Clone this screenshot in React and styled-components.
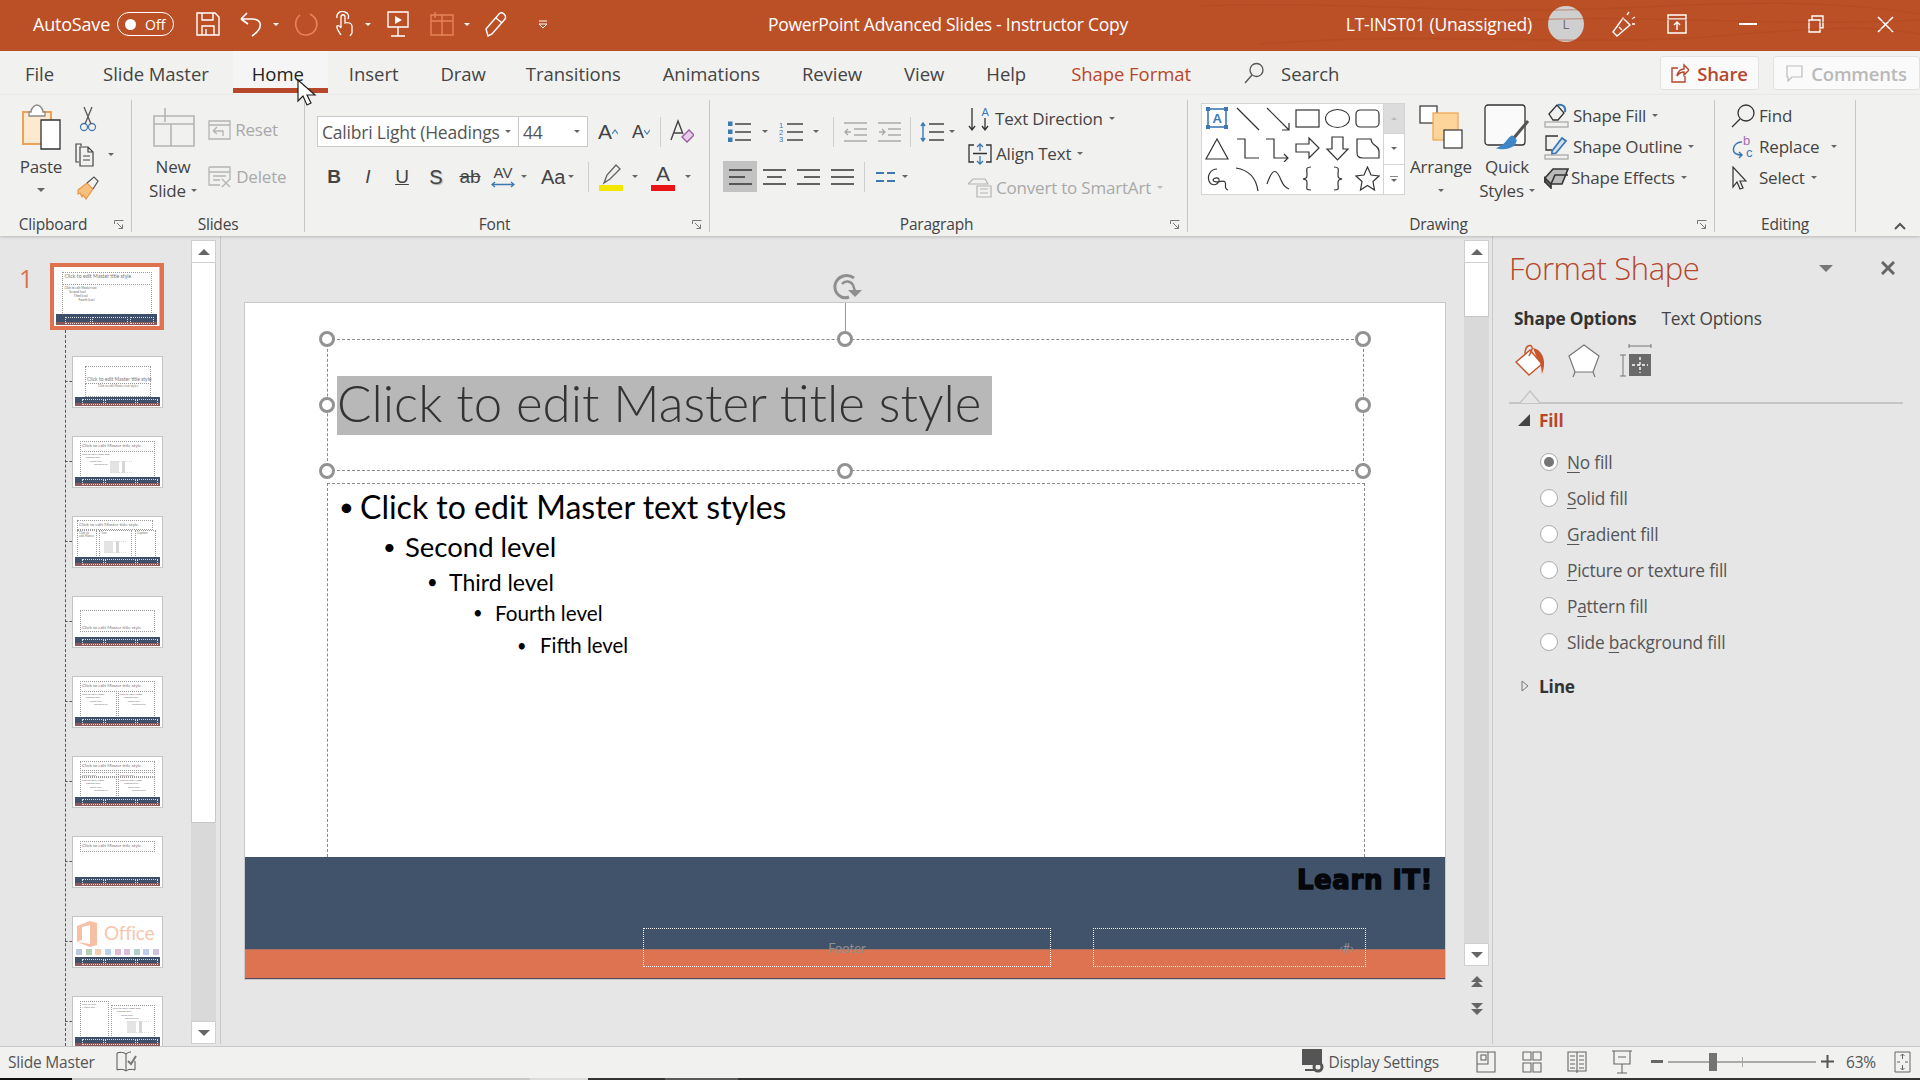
import React from "react";
import styled, { createGlobalStyle } from "styled-components";

const RUST = "#b7472a";
const INK = "#444";
const DIM = "#a9a9a9";
const BLUE = "#3e78b3";
const UI = '"Open Sans", "Noto Sans", sans-serif';
const DOC = 'Lato, "Open Sans", sans-serif';

const Global = createGlobalStyle`
  html, body { margin: 0; padding: 0; width: 1920px; height: 1080px; overflow: hidden; background: #e6e6e6; }
  body { font-family: ${UI}; color: ${INK}; }
  * { box-sizing: border-box; }
`;

const Window = styled.div`
  position: relative;
  width: 1920px;
  height: 1080px;
  display: flex;
  flex-direction: column;
  overflow: hidden;
`;

const Svg = styled.svg`
  display: block;
  flex: none;
  margin-left: ${(p) => p.$ml || 0}px;
`;

const Icon = ({ w, h, ml, children, stroke = INK, sw = 1.4, fill = "none" }) => (
  <Svg width={w} height={h} viewBox={`0 0 ${w} ${h}`} $ml={ml} fill={fill} stroke={stroke} strokeWidth={sw}>
    {children}
  </Svg>
);

const Caret = styled.span`
  display: block;
  flex: none;
  width: 0;
  height: 0;
  margin-left: ${(p) => p.$ml || 0}px;
  border-left: ${(p) => p.$s || 4}px solid transparent;
  border-right: ${(p) => p.$s || 4}px solid transparent;
  border-top: ${(p) => p.$s || 4}px solid ${(p) => p.$c || "#666"};
`;

/* title bar */
const TitleBar = styled.header`
  position: relative;
  height: 51px;
  flex: none;
  display: flex;
  align-items: center;
  padding-bottom: 3px;
  background: #bb5027;
  color: #fff;
  font-size: 17px;
  overflow: hidden;
`;

const Wood = styled.svg`
  position: absolute;
  top: 0;
  right: 0;
`;

const Quick = styled.div`
  flex: 0 0 768px;
  display: flex;
  align-items: center;
  padding-left: 33px;
`;

const AutoSave = styled.span`
  font-size: 18px;
  letter-spacing: -0.2px;
`;

const Toggle = styled.span`
  margin-left: 7px;
  width: 57px;
  height: 24px;
  border: 1px solid #fff;
  border-radius: 12px;
  display: flex;
  align-items: center;
  padding-left: 7px;
  font-size: 14px;
  gap: 9px;
  &::before {
    content: "";
    width: 11px;
    height: 11px;
    border-radius: 50%;
    background: #fff;
  }
`;

const DocTitle = styled.span`
  font-size: 17.5px;
  letter-spacing: -0.25px;
  white-space: nowrap;
`;

const TitleRight = styled.div`
  margin-left: auto;
  display: flex;
  align-items: center;
  padding-right: 26px;
`;

const Avatar = styled.span`
  margin-left: 16px;
  width: 36px;
  height: 36px;
  border-radius: 50%;
  background: #d0cfcf;
  color: #6b6b6b;
  font-size: 13px;
  display: flex;
  align-items: center;
  justify-content: center;
`;

/* tabs */
const TabRow = styled.nav`
  height: 44px;
  flex: none;
  display: flex;
  align-items: center;
  background: #f1f1f0;
  padding-left: 4px;
  font-size: 18.5px;
  letter-spacing: -0.05px;
`;

const Tab = styled.span`
  position: relative;
  height: 44px;
  display: flex;
  align-items: center;
  white-space: nowrap;
  padding: 0 ${(p) => p.$pr ?? 21}px 0 ${(p) => p.$pl ?? 21}px;
  color: ${(p) => (p.$active ? "#222" : p.$accent ? RUST : INK)};
  ${(p) =>
    p.$active &&
    `background:#f5f5f5;
     &::after{content:"";position:absolute;left:0;right:0;top:37px;height:5px;background:${RUST};}`}
`;

const SearchLabel = styled.span`
  margin-left: 17px;
`;

const ShareButton = styled.span`
  height: 34px;
  display: flex;
  align-items: center;
  justify-content: center;
  gap: 8px;
  background: #fafafa;
  border: 1px solid #e2e2e2;
  border-radius: 3px;
  font-weight: 600;
  font-size: 18.5px;
  letter-spacing: -0.2px;
  width: ${(p) => p.$w}px;
  margin-left: ${(p) => p.$ml};
  color: ${(p) => (p.$off ? "#b9b9b9" : RUST)};
`;

/* ribbon */
const Ribbon = styled.section`
  position: relative;
  z-index: 2;
  height: 141px;
  flex: none;
  display: flex;
  padding-top: 5px;
  background: #f1f1f0;
  box-shadow: 0 1px 3px rgba(0, 0, 0, 0.2);
  font-size: 17px;
  letter-spacing: -0.2px;
`;

const GroupBox = styled.div`
  position: relative;
  flex: none;
  width: ${(p) => p.$w}px;
  height: 132px;
  border-right: 1px solid #c6c6c6;
  display: flex;
  flex-direction: column;
`;

const GroupBody = styled.div`
  height: 117px;
  display: flex;
  padding-left: ${(p) => p.$pl || 0}px;
  padding-top: ${(p) => p.$pt || 0}px;
`;

const GroupLabel = styled.div`
  height: 14px;
  line-height: 14px;
  font-size: 15.5px;
  text-align: center;
  padding-right: ${(p) => p.$shift || 0}px;
  white-space: nowrap;
`;

const Launcher = styled.span`
  position: absolute;
  right: 7px;
  bottom: 2px;
`;

const Group = ({ w, label, launcher, pl, pt, shift, children }) => (
  <GroupBox $w={w}>
    <GroupBody $pl={pl} $pt={pt}>
      {children}
    </GroupBody>
    <GroupLabel $shift={shift}>{label}</GroupLabel>
    {launcher && (
      <Launcher>
        <Icon w={10} h={10} stroke="#777" sw={1}>
          <path d="M0.5 4V0.5H9.5M3 3L8.5 8.5M8.5 4.5V8.5H4.5" />
        </Icon>
      </Launcher>
    )}
  </GroupBox>
);

const BigButton = styled.div`
  flex: none;
  width: ${(p) => p.$w}px;
  margin-left: ${(p) => p.$ml || 0}px;
  display: flex;
  flex-direction: column;
  align-items: center;
`;

const BigIcon = styled.div`
  height: 54px;
  padding-bottom: 1px;
  display: flex;
  align-items: center;
  justify-content: center;
`;

const BigLine = styled.div`
  height: 24px;
  display: flex;
  align-items: center;
  gap: 5px;
  white-space: nowrap;
  color: ${(p) => (p.$off ? DIM : INK)};
`;

const SmallColumn = styled.div`
  flex: none;
  display: flex;
  flex-direction: column;
  margin-left: ${(p) => p.$ml || 0}px;
  padding-top: ${(p) => p.$pt || 0}px;
`;

const SmallSlot = styled.div`
  height: ${(p) => p.$h}px;
  display: flex;
  align-items: center;
`;

const Rows = styled.div`
  flex: none;
  width: ${(p) => p.$w}px;
  display: flex;
  flex-direction: column;
  gap: 14px;
  padding-top: 16px;
`;

const Row = styled.div`
  height: 31px;
  display: flex;
  align-items: center;
`;

const FontField = styled.div`
  height: 31px;
  width: ${(p) => p.$w}px;
  background: #fff;
  border: 1px solid #c9c9c9;
  margin-left: -1px;
  display: flex;
  align-items: center;
  justify-content: space-between;
  padding: 0 7px 0 4px;
  font-size: 17.5px;
  color: #555;
  white-space: nowrap;
`;

const Tool = styled.div`
  flex: none;
  width: ${(p) => p.$w}px;
  height: 31px;
  margin-left: ${(p) => p.$ml || 0}px;
  display: flex;
  align-items: center;
  justify-content: ${(p) => (p.$pl === undefined ? "center" : "flex-start")};
  padding-left: ${(p) => p.$pl || 0}px;
  background: ${(p) => (p.$on ? "#c2c2c2" : "transparent")};
  color: ${INK};
`;

const Glyph = styled.span`
  font-family: "Liberation Sans", sans-serif;
  font-size: ${(p) => p.$s || 19}px;
  font-weight: ${(p) => (p.$b ? 700 : 400)};
  font-style: ${(p) => (p.$i ? "italic" : "normal")};
  text-decoration: ${(p) => p.$d || "none"};
  text-shadow: ${(p) => (p.$shadow ? "1px 1px 1px #aaa" : "none")};
  letter-spacing: 0;
  line-height: 1;
`;

const SpacingStack = styled.span`
  display: flex;
  flex-direction: column;
  align-items: center;
  gap: 1px;
`;

const ToolSep = styled.span`
  flex: none;
  width: 1px;
  height: 30px;
  background: #cfcfcf;
  margin-left: ${(p) => p.$ml || 0}px;
`;

const ColorIcon = styled.span`
  position: relative;
  width: 24px;
  height: 28px;
  display: flex;
  justify-content: center;
  &::after {
    content: "";
    position: absolute;
    left: 0;
    right: 0;
    bottom: 0;
    height: 6px;
    background: ${(p) => p.$c};
  }
`;

const Commands = styled.div`
  flex: none;
  display: flex;
  flex-direction: column;
  margin-left: ${(p) => p.$ml || 0}px;
  padding-top: ${(p) => p.$pt || 0}px;
`;

const Command = styled.div`
  height: ${(p) => p.$h}px;
  display: flex;
  align-items: center;
  white-space: nowrap;
  color: ${(p) => (p.$off ? DIM : INK)};
`;

const CommandIcon = styled.span`
  flex: none;
  width: ${(p) => p.$w}px;
  display: flex;
  align-items: center;
`;

const Gallery = styled.div`
  flex: none;
  margin-top: 3px;
  width: 204px;
  height: 92px;
  background: #fff;
  border: 1px solid #d4d4d4;
  display: flex;
`;

const ShapeGrid = styled.div`
  flex: none;
  width: 181px;
  display: grid;
  grid-template-columns: repeat(6, 30px);
  grid-auto-rows: 30px;
  justify-items: center;
  align-items: center;
`;

const GalleryScroll = styled.div`
  flex: 1;
  display: flex;
  flex-direction: column;
  border-left: 1px solid #d4d4d4;
`;

const GalleryStep = styled.div`
  flex: 1;
  display: flex;
  flex-direction: column;
  align-items: center;
  justify-content: center;
  gap: 2px;
  background: ${(p) => (p.$off ? "#dcdcdc" : "#fff")};
  & + & {
    border-top: 1px solid #d4d4d4;
  }
`;

const Bar = styled.span`
  width: 8px;
  height: 1px;
  background: #888;
`;

const UpCaret = styled(Caret)`
  transform: rotate(180deg);
`;

const Collapse = styled.div`
  margin-left: 38px;
  align-self: flex-end;
  margin-bottom: 6px;
`;

/* workspace */
const Workspace = styled.main`
  flex: 1;
  min-height: 0;
  display: flex;
  background: #e6e6e6;
`;

const ThumbPane = styled.aside`
  flex: none;
  width: 191px;
  display: flex;
  flex-direction: column;
  overflow: hidden;
`;

const MasterRow = styled.div`
  flex: none;
  display: flex;
  padding: 27px 0 0 19px;
`;

const SlideNumber = styled.span`
  width: 31px;
  font-size: 25px;
  line-height: 30px;
  color: #dd7350;
`;

const Selected = styled.div`
  width: 114px;
  height: 67px;
  border: 4px solid #e0734f;
  background: #fff;
  overflow: hidden;
`;

const ChildList = styled.div`
  flex: 1;
  min-height: 0;
  margin-left: 65px;
  border-left: 1px dashed #555;
  padding: 27px 0 0 7px;
  display: flex;
  flex-direction: column;
  gap: 30px;
`;

const ChildSlot = styled.div`
  position: relative;
  flex: none;
  width: 89px;
  height: 50px;
  &::before {
    content: "";
    position: absolute;
    left: -8px;
    top: 24px;
    width: 7px;
    border-top: 1px dashed #555;
  }
`;

const Mini = styled.div`
  position: relative;
  width: 89px;
  height: 50px;
  background: #fff;
  outline: 1px solid #c4c4c4;
  overflow: hidden;
  zoom: ${(p) => p.$zoom || 1};
`;

const MiniBand = styled.div`
  position: absolute;
  left: 2px;
  right: 2px;
  bottom: 1px;
  height: 9px;
  background: linear-gradient(#3d4f69 0 70%, #8a5a5a 70% 100%);
`;

const MiniBox = styled.div`
  position: absolute;
  left: ${(p) => p.$l}px;
  top: ${(p) => p.$t}px;
  width: ${(p) => p.$w}px;
  height: ${(p) => p.$h}px;
  border: 1px dotted ${(p) => (p.$white ? "rgba(255,255,255,0.8)" : "#999")};
  display: flex;
  flex-direction: column;
  justify-content: ${(p) => (p.$end ? "flex-end" : "flex-start")};
  align-items: ${(p) => (p.$center ? "center" : "flex-start")};
  padding: 1px;
  font-family: ${DOC};
  font-size: ${(p) => p.$s || 4.6}px;
  letter-spacing: 0;
  line-height: 1.1;
  color: #777;
  white-space: nowrap;
`;

const MiniLine = styled.span`
  display: block;
  margin-left: ${(p) => p.$i * 2}px;
  font-size: 2.6px;
  line-height: 3.4px;
  color: #666;
`;

const MiniChart = styled.span`
  position: absolute;
  right: ${(p) => p.$r}px;
  bottom: 4px;
  width: 22px;
  height: 12px;
  border-top: 1px dotted #ddd;
  border-bottom: 1px dotted #ddd;
  background: linear-gradient(90deg, #e4e4e4 0 40%, transparent 40% 55%, #d6d6d6 55% 70%, transparent 70%);
`;

const OfficeLogo = styled.svg`
  position: absolute;
  left: 2px;
  top: 3px;
`;

const OfficeWord = styled.span`
  position: absolute;
  left: 31px;
  top: 5px;
  font-family: ${DOC};
  font-size: 19px;
  line-height: 22px;
  color: #f7c6ae;
  letter-spacing: -0.3px;
`;

const OfficeApps = styled.div`
  position: absolute;
  left: 3px;
  right: 3px;
  top: 32px;
  display: flex;
  justify-content: space-between;
`;

const OfficeApp = styled.span`
  width: 6px;
  height: 6px;
  background: ${(p) => p.$c};
  opacity: 0.55;
`;

const Canvas = styled.div`
  flex: 1;
  min-width: 0;
  padding: 67px 0 0 24px;
  border-left: 1px solid #c9c9c9;
  margin-left: 4px;
  margin-bottom: 2px;
`;

const Slide = styled.div`
  position: relative;
  width: 1200px;
  height: 676px;
  display: flex;
  flex-direction: column;
  background: #fff;
  outline: 1px solid #c8c8c8;
`;

const SlideSheet = styled.div`
  flex: 1;
`;

const SlideBand = styled.div`
  flex: none;
  height: 92px;
  background: #40536b;
  display: flex;
  justify-content: flex-end;
  padding: 9px 12px 0 0;
`;

const LearnIt = styled.span`
  font-family: "DejaVu Sans", sans-serif;
  font-weight: 700;
  font-size: 26px;
  line-height: 28px;
  color: #05070c;
  -webkit-text-stroke: 1.4px #05070c;
  letter-spacing: 0.6px;
`;

const SlideStripe = styled.div`
  flex: none;
  height: 30px;
  background: #dd7350;
  border-bottom: 1px solid #5a4660;
  border-top: 1px solid #b0705f;
`;

const Placeholder = styled.div`
  position: absolute;
  left: ${(p) => p.$l}px;
  top: ${(p) => p.$t}px;
  width: ${(p) => p.$w}px;
  height: ${(p) => p.$h}px;
  border: 1px ${(p) => p.$line || "dashed"} ${(p) => p.$c || "#8a8a8a"};
  ${(p) => p.$open && "border-bottom: none;"}
`;

const TitleBox = styled(Placeholder)`
  display: flex;
  align-items: center;
  padding-left: 9px;
`;

const Selection = styled.span`
  width: 655px;
  height: 59px;
  background: #b8b8b8;
  font-family: ${DOC};
  font-weight: 300;
  font-size: 51px;
  line-height: 53px;
  color: #333;
  white-space: nowrap;
`;

const Level = styled.div`
  height: ${(p) => p.$h}px;
  display: flex;
  align-items: center;
  padding-left: ${(p) => p.$bullet}px;
  font-family: ${DOC};
  font-size: ${(p) => p.$s}px;
  color: #000;
  white-space: nowrap;
`;

const Bullet = styled.span`
  flex: none;
  width: ${(p) => p.$w}px;
  font-size: 0.8em;
`;

const FooterText = styled.span`
  position: absolute;
  top: 10px;
  ${(p) => (p.$end ? "right: 11px;" : "left: 0; right: 0; text-align: center;")}
  font-family: ${DOC};
  font-size: 13px;
  line-height: 18px;
  color: #8f8f8f;
`;

const Handle = styled.span`
  position: absolute;
  left: ${(p) => p.$x - 8}px;
  top: ${(p) => p.$y - 8}px;
  width: 16px;
  height: 16px;
  border-radius: 50%;
  border: 3px solid #929292;
  background: #fff;
`;

const RotateStem = styled.span`
  position: absolute;
  left: 600px;
  top: 0;
  width: 1px;
  height: 28px;
  background: #999;
`;

const RotateHandle = styled.span`
  position: absolute;
  left: 587px;
  top: -30px;
`;

/* scroll bars */
const ScrollBar = styled.div`
  flex: none;
  width: 25px;
  display: flex;
  flex-direction: column;
  background: #d9d9d9;
  height: ${(p) => p.$h}px;
  margin-top: 4px;
`;

const ScrollButton = styled.div`
  flex: none;
  height: 23px;
  background: #fff;
  border: 1px solid #cfcfcf;
  display: flex;
  align-items: center;
  justify-content: center;
`;

const ScrollThumb = styled.div`
  flex: none;
  height: ${(p) => p.$h}px;
  background: #fff;
  border: 1px solid #c8c8c8;
  border-top: none;
`;

const ScrollTrack = styled.div`
  flex: 1;
`;

const SideScroll = styled.div`
  flex: none;
  width: 27px;
  display: flex;
  flex-direction: column;
  margin-right: 1px;
`;

const PageStep = styled.div`
  flex: none;
  width: 25px;
  height: 27px;
  display: flex;
  flex-direction: column;
  align-items: center;
  justify-content: center;
`;

const StackUp = styled(UpCaret)`
  margin-top: -1px;
`;

const SideGap = styled.div`
  height: 2px;
  flex: none;
`;

/* format pane */
const Pane = styled.aside`
  flex: none;
  width: 428px;
  border-left: 1px solid #c9c9c9;
  padding: 12px 25px 0 16px;
  margin-bottom: 2px;
  font-size: 17.3px;
  letter-spacing: -0.2px;
`;

const PaneHead = styled.div`
  height: 40px;
  display: flex;
  align-items: center;
`;

const PaneTitle = styled.h2`
  margin: 0;
  font-size: 31px;
  font-weight: 300;
  letter-spacing: -0.4px;
  color: ${RUST};
`;

const PaneDrop = styled(Caret)`
  margin-left: auto;
`;

const Modes = styled.div`
  margin: 16px 0 0 5px;
  height: 28px;
  display: flex;
  align-items: center;
  gap: 25px;
`;

const Mode = styled.span`
  font-weight: ${(p) => (p.$on ? 700 : 400)};
  color: ${(p) => (p.$on ? "#333" : INK)};
`;

const PaneIcons = styled.div`
  margin: 11px 0 0 6px;
  height: 35px;
  display: flex;
  align-items: center;
  gap: 20px;
`;

const PaneRule = styled.div`
  position: relative;
  margin: 24px -8px 0 0;
  height: 2px;
  background: #c6c6c6;
`;

const Notch = styled.span`
  position: absolute;
  left: 11px;
  top: -12px;
`;

const SectionHead = styled.div`
  height: 28px;
  margin-top: ${(p) => p.$mt || 0}px;
  display: flex;
  align-items: center;
  padding-left: ${(p) => p.$pl}px;
  font-weight: 700;
  color: ${(p) => p.$c || "#333"};
`;

const SectionName = styled.span`
  margin-left: ${(p) => p.$ml}px;
`;

const RadioList = styled.div`
  margin-top: 10px;
  padding-left: 31px;
`;

const RadioRow = styled.label`
  height: 36px;
  display: flex;
  align-items: center;
  gap: 9px;
  color: #555;
  u {
    text-underline-offset: 3px;
  }
`;

const RadioDot = styled.span`
  width: 18px;
  height: 18px;
  border-radius: 50%;
  background: #fff;
  border: 1px solid #aaa;
  display: flex;
  align-items: center;
  justify-content: center;
  &::after {
    content: "";
    width: 10px;
    height: 10px;
    border-radius: 50%;
    background: ${(p) => (p.$on ? "#757575" : "transparent")};
  }
`;

/* status bar */
const StatusBar = styled.footer`
  flex: none;
  height: 32px;
  display: flex;
  align-items: center;
  padding: 0 9px 2px 8px;
  background: #f1f1f0;
  border-top: 1px solid #c8c8c8;
  font-size: 15.5px;
  letter-spacing: -0.2px;
  color: #555;
`;

const StatusRight = styled.div`
  margin-left: auto;
  display: flex;
  align-items: center;
`;

const StatusText = styled.span`
  margin-left: ${(p) => p.$ml || 0}px;
`;

const Zoom = styled.div`
  position: relative;
  margin-left: 5px;
  width: 148px;
  height: 2px;
  background: #a9a9a9;
`;

const ZoomThumb = styled.span`
  position: absolute;
  left: 41px;
  top: -8px;
  width: 8px;
  height: 18px;
  background: #737373;
`;

const ZoomTick = styled.span`
  position: absolute;
  left: 74px;
  top: -4px;
  width: 1px;
  height: 10px;
  background: #a9a9a9;
`;

const TaskStrip = styled.div`
  flex: none;
  height: 2px;
  background: linear-gradient(
    90deg,
    #111 0 72px,
    #c9c9c9 72px 530px,
    #dcdcdc 530px 588px,
    #333 588px 665px,
    #5a5a5a 665px 738px,
    #333 738px
  );
`;

const Pointer = styled.svg`
  position: absolute;
  left: 297px;
  top: 79px;
  z-index: 5;
`;

/* little pictures of the layouts in the slide sorter */
const ListLines = ({ first = "Click to edit Master text" }) => (
  <>
    <MiniLine $i={0}>{first}</MiniLine>
    <MiniLine $i={2}>Second level</MiniLine>
    <MiniLine $i={4}>Third level</MiniLine>
    <MiniLine $i={6}>Fourth level</MiniLine>
  </>
);

const T = "Click to edit Master title style";

const Footers = () => (
  <>
    <MiniBox $white $l={9} $t={42} $w={22} $h={6} />
    <MiniBox $white $l={32} $t={42} $w={31} $h={6} />
    <MiniBox $white $l={64} $t={42} $w={21} $h={6} />
  </>
);

const layouts = [
  <>
    <MiniBox $l={12} $t={9} $w={66} $h={18} $end $s={5}>{T}</MiniBox>
    <MiniBox $l={12} $t={26} $w={66} $h={14} $center $s={3}>Click to edit Master text styles</MiniBox>
  </>,
  <>
    <MiniBox $l={7} $t={4} $w={75} $h={11}>{T}</MiniBox>
    <MiniBox $l={7} $t={14} $w={75} $h={27}><ListLines /><MiniChart $r={22} /></MiniBox>
  </>,
  <>
    <MiniBox $l={4} $t={3} $w={76} $h={10}>{T}</MiniBox>
    <MiniBox $l={4} $t={13} $w={20} $h={28} $s={3}><span>Click to</span><span>edit Master</span></MiniBox>
    <MiniBox $l={26} $t={13} $w={33} $h={28} $s={3}><span>Text</span><MiniChart $r={5} /></MiniBox>
    <MiniBox $l={62} $t={13} $w={21} $h={28} $s={3}><span>Caption</span></MiniBox>
  </>,
  <>
    <MiniBox $l={7} $t={13} $w={75} $h={22} $end>{T}</MiniBox>
  </>,
  <>
    <MiniBox $l={7} $t={4} $w={75} $h={11}>{T}</MiniBox>
    <MiniBox $l={7} $t={14} $w={37} $h={27}><ListLines first="Click to edit Master" /></MiniBox>
    <MiniBox $l={45} $t={14} $w={37} $h={27}><ListLines first="Click to edit Master" /></MiniBox>
  </>,
  <>
    <MiniBox $l={7} $t={4} $w={75} $h={10}>{T}</MiniBox>
    <MiniBox $l={7} $t={15} $w={37} $h={5} $s={2.6}>Click to edit</MiniBox>
    <MiniBox $l={45} $t={15} $w={37} $h={5} $s={2.6}>Click to edit</MiniBox>
    <MiniBox $l={7} $t={20} $w={37} $h={21}><ListLines first="Click to edit Master" /></MiniBox>
    <MiniBox $l={45} $t={20} $w={37} $h={21}><ListLines first="Click to edit Master" /></MiniBox>
  </>,
  <>
    <MiniBox $l={7} $t={4} $w={75} $h={11}>{T}</MiniBox>
  </>,
  <>
    <OfficeLogo width="24" height="28" viewBox="0 0 24 28">
      <path d="M2 6L15 1L22 3V25L15 27L2 22L15 24V5L7 7V20L2 22Z" fill="#f7bfa4" />
    </OfficeLogo>
    <OfficeWord>Office</OfficeWord>
    <OfficeApps>
      {["#7d9ac4", "#74a878", "#e7a56f", "#7fa7d8", "#c67fb0", "#b58ac2", "#6ea7a4", "#7fa7d8", "#a78fc8"].map((c, i) => (
        <OfficeApp key={i} $c={c} />
      ))}
    </OfficeApps>
  </>,
  <>
    <MiniBox $l={7} $t={4} $w={29} $h={37} $s={2.6}><span>Click to edit</span><span>Master title</span></MiniBox>
    <MiniBox $l={38} $t={8} $w={44} $h={33}><ListLines /><MiniChart $r={5} /></MiniBox>
  </>,
];

const Thumb = ({ children, zoom }) => (
  <Mini $zoom={zoom}>
    {children}
    <MiniBand />
    <Footers />
  </Mini>
);

/* toolbar pictures */
const ListIcon = ({ marks, dim, children }) => (
  <Icon w={24} h={22} stroke={dim ? "#aaa" : INK}>
    <path d={marks} />
    {children}
  </Icon>
);

const AlignIcon = ({ d }) => (
  <Icon w={23} h={20} stroke="#333" sw={1.6}>
    <path d={d} />
  </Icon>
);

const shapes = [
  <>
    <rect x="3" y="3" width="18" height="18" stroke={BLUE} strokeWidth="1.6" />
    <text x="12" y="17" fontSize="13" fontFamily="Liberation Sans" fontWeight="700" fill={BLUE} stroke="none" textAnchor="middle">A</text>
    {[[3, 3], [21, 3], [3, 21], [21, 21]].map(([x, y]) => (
      <rect key={x * 100 + y} x={x - 2} y={y - 2} width="4" height="4" fill={BLUE} stroke="none" />
    ))}
  </>,
  <path d="M2 2L24 24" />,
  <path d="M2 2L24 24M24 17V24H17" />,
  <rect x="1" y="4" width="23" height="17" />,
  <ellipse cx="12.5" cy="12.5" rx="12" ry="9" />,
  <rect x="1" y="4" width="23" height="17" rx="4" />,
  <path d="M12 3L23 23H1Z" />,
  <path d="M2 3H10V22H24" />,
  <path d="M1 3H9V22H23M19 18L23 22L19 26" />,
  <path d="M1 8H14V2L24 12L14 22V16H1Z" />,
  <path d="M7 1H18V13H23L12.5 24L2 13H7Z" />,
  <path d="M2 3H16C16 10 24 9 24 15V22H8C3 22 2 20 2 16Z" />,
  <path d="M12 3C6 3 2 9 4 15C6 20 12 20 14 15C15 11 9 11 8 14C9 19 18 13 20 16C22 19 18 22 23 24" />,
  <path d="M1 2C13 4 21 10 23 25" />,
  <path d="M2 18C8 0 12 4 16 14C18 19 21 22 24 23" />,
  <path d="M16 1C10 1 12 4 12 8C12 12 12 12 8 13C12 14 12 14 12 18C12 22 10 24 16 24" />,
  <path d="M9 1C15 1 13 4 13 8C13 12 13 12 17 13C13 14 13 14 13 18C13 22 15 24 9 24" />,
  <path d="M12.5 1L16 9L24 10L18 15.5L19.5 24L12.5 19.5L5.5 24L7 15.5L1 10L9 9Z" />,
];

const Mark = ({ u }) => <u>{u}</u>;

const fills = [
  [<><Mark u="N" />o fill</>, true],
  [<><Mark u="S" />olid fill</>],
  [<><Mark u="G" />radient fill</>],
  [<><Mark u="P" />icture or texture fill</>],
  [<>P<Mark u="a" />ttern fill</>],
  [<>Slide <Mark u="b" />ackground fill</>],
];

const handles = [
  [82, 36], [600, 36], [1118, 36],
  [82, 102], [1118, 102],
  [82, 168], [600, 168], [1118, 168],
];

const App = () => (
  <Window>
    <Global />

    <TitleBar>
      <Wood width="720" height="51" viewBox="0 0 720 51" fill="none" stroke="#a94519" strokeWidth="1.5" opacity="0.35">
        <path d="M0 6C140 0 260 16 420 8S640 2 720 14" />
        <path d="M60 44C240 30 380 48 520 36S680 28 720 34" />
        <path d="M300 22C420 12 560 28 720 20" />
      </Wood>
      <Quick>
        <AutoSave>AutoSave</AutoSave>
        <Toggle>Off</Toggle>
        <Icon w={24} h={24} ml={22} stroke="#fff">
          <path d="M1 1H19L23 5V23H1ZM6 1V8H17V1M6 23V14H18V23M10 17V23" />
        </Icon>
        <Icon w={24} h={26} ml={19} stroke="#fff" sw={1.6}>
          <path d="M2 8L8 2M2 8L9 13M2 8H13C23 8 25 17 13 25" />
        </Icon>
        <Caret $ml={10} $c="#fff" $s={3} />
        <Icon w={24} h={24} ml={15} stroke="#e8845a" sw={1.6}>
          <path d="M16 2C27 8 24 22 12 23C2 23-2 10 6 3" />
        </Icon>
        <Icon w={18} h={26} ml={17} stroke="#fff" sw={1.3}>
          <path d="M6 24C4 20 1 18 2 15C3 14 5 15 6 17V6C6 3 10 3 10 6V12C13 11 17 12 17 15V22L15 25M2 7C1 2 6-1 10 1C14 2 14 6 13 8" />
        </Icon>
        <Caret $ml={12} $c="#fff" $s={3} />
        <Icon w={24} h={26} ml={15} stroke="#fff" sw={1.4}>
          <path d="M2 1H22V16H2ZM12 16V25M5 25H19" />
          <path d="M9 5L16 9L9 13Z" fill="#fff" stroke="none" />
        </Icon>
        <Icon w={24} h={24} ml={20} stroke="#e8845a" sw={1.4}>
          <path d="M1 3H23V23H1ZM1 3V23M1 9H23M12 3V23M5 0V6" />
        </Icon>
        <Caret $ml={10} $c="#fff" $s={3} />
        <Icon w={24} h={26} ml={14} stroke="#fff" sw={1.4}>
          <path d="M4 25L2 18L15 3C18 0 23 4 21 8L8 23ZM12 7L18 12" />
        </Icon>
        <Icon w={8} h={8} ml={31} stroke="#fff" sw={1}>
          <path d="M0 1H8M0 4H8L4 8Z" />
        </Icon>
      </Quick>
      <DocTitle>PowerPoint Advanced Slides - Instructor Copy</DocTitle>
      <TitleRight>
        <DocTitle>LT-INST01 (Unassigned)</DocTitle>
        <Avatar>L</Avatar>
        <Icon w={24} h={26} ml={28} stroke="#fff" sw={1.4}>
          <path d="M5 25L1 21L11 7L18 14ZM7 16L10 19M15 4L17 1M20 8L23 6M20 13L23 13" />
        </Icon>
        <Icon w={20} h={20} ml={31} stroke="#fff" sw={1.4}>
          <path d="M1 1H19V19H1ZM1 5H19M10 16V8M7 11L10 8L13 11" />
        </Icon>
        <Icon w={18} h={2} ml={52} stroke="#fff" sw={2}>
          <path d="M0 1H18" />
        </Icon>
        <Icon w={16} h={18} ml={51} stroke="#fff" sw={1.4}>
          <path d="M1 5H12V17H1ZM4 5V1H15V13H12" />
        </Icon>
        <Icon w={17} h={17} ml={53} stroke="#fff" sw={1.6}>
          <path d="M1 1L16 16M16 1L1 16" />
        </Icon>
      </TitleRight>
    </TitleBar>

    <TabRow>
      <Tab>File</Tab>
      <Tab $pl={28} $pr={24}>Slide Master</Tab>
      <Tab $active $pl={19} $pr={24}>Home</Tab>
      <Tab>Insert</Tab>
      <Tab $pr={19}>Draw</Tab>
      <Tab>Transitions</Tab>
      <Tab>Animations</Tab>
      <Tab>Review</Tab>
      <Tab>View</Tab>
      <Tab>Help</Tab>
      <Tab $accent $pl={24}>Shape Format</Tab>
      <Icon w={20} h={22} ml={32} stroke="#555" sw={1.3}>
        <circle cx="12.5" cy="8" r="6.5" />
        <path d="M8 13L1 21" />
      </Icon>
      <SearchLabel>Search</SearchLabel>
      <ShareButton $w={99} $ml="auto">
        <Icon w={18} h={20} stroke={RUST} sw={1.4}>
          <path d="M7 5H1V19H14V13M6 13C7 8 10 6 13 6V2L18 7L13 12V9C10 9 8 10 6 13Z" />
        </Icon>
        Share
      </ShareButton>
      <ShareButton $w={147} $ml="14px" $off>
        <Icon w={17} h={17} stroke="#bdbdbd" sw={1.2}>
          <path d="M1 1H16V12H6L2 16V12H1Z" />
        </Icon>
        Comments
      </ShareButton>
    </TabRow>

    <Ribbon>
      <Group w={132} label="Clipboard" launcher pl={19} shift={25}>
        <BigButton $w={44}>
          <BigIcon>
            <Icon w={40} h={46} stroke="#555" sw={1.3}>
              <path d="M2 8H30V40H2Z" fill="#fde9cf" stroke="#e9a15c" strokeWidth={2} />
              <path d="M10 8C10 3 15 1 16 1S22 3 22 8H24V12H8V8Z" fill="#fff" stroke="#8a8a8a" />
              <path d="M20 16H39V45H20Z" fill="#fff" stroke="#333" />
            </Icon>
          </BigIcon>
          <BigLine>Paste</BigLine>
          <BigLine><Caret /></BigLine>
        </BigButton>
        <SmallColumn $ml={12}>
          <SmallSlot $h={38}>
            <Icon w={18} h={26} ml={4} stroke="#4a7db1" sw={1.3}>
              <circle cx="5" cy="21" r="3.5" />
              <circle cx="13" cy="21" r="3.5" />
              <path d="M6 18L13 1M12 18L5 1" stroke="#555" />
            </Icon>
          </SmallSlot>
          <SmallSlot $h={33}>
            <Icon w={25} h={24} stroke="#444" sw={1.2}>
              <path d="M6 3V1H1V19H4M5 4H13L18 9V23H5ZM13 4V9H18M8 13H15M8 17H15" />
            </Icon>
            <Caret $ml={8} $s={3} />
          </SmallSlot>
          <SmallSlot $h={33}>
            <Icon w={24} h={24} stroke="#555" sw={1.2}>
              <path d="M3 14L12 7L18 13L11 23L8 19L7 21L5 17L3 18Z" fill="#f7c07f" stroke="#e8964a" />
              <path d="M12 7L19 1L23 5L18 13" />
            </Icon>
          </SmallSlot>
        </SmallColumn>
      </Group>

      <Group w={173} label="Slides" pl={9}>
        <BigButton $w={64}>
          <BigIcon>
            <Icon w={45} h={42} stroke="#b4b4b4" sw={1.6}>
              <path d="M3 10H43V40H3ZM3 18H43M20 18V40M14 2V16" />
            </Icon>
          </BigIcon>
          <BigLine>New</BigLine>
          <BigLine>Slide <Caret $s={3} /></BigLine>
        </BigButton>
        <SmallColumn $ml={3} $pt={6}>
          <SmallSlot $h={47}>
            <Icon w={23} h={20} stroke="#b4b4b4" sw={1.3}>
              <path d="M1 1H22V19H1ZM1 5H22M5 11L9 7M5 11L9 14M5 11H15V16" />
            </Icon>
            <BigLine $off>&nbsp;Reset</BigLine>
          </SmallSlot>
          <SmallSlot $h={47}>
            <Icon w={24} h={22} stroke="#b4b4b4" sw={1.3}>
              <path d="M1 1H22V14M1 1V19H12M1 6H22M5 10H18M5 14H12M14 13L22 21M22 13L14 21" />
            </Icon>
            <BigLine $off>&nbsp;Delete</BigLine>
          </SmallSlot>
        </SmallColumn>
      </Group>

      <Group w={405} label="Font" launcher pl={13} shift={25}>
        <Rows $w={392}>
          <Row>
            <FontField $w={202}>Calibri Light (Headings<Caret $s={3} /></FontField>
            <FontField $w={70}>44<Caret $s={3} /></FontField>
            <Tool $w={20} $ml={10}><Glyph $s={21}>A</Glyph><Icon w={6} h={6} sw={1.2} stroke="#4a7db1"><path d="M0 5L3 1L6 5" /></Icon></Tool>
            <Tool $w={20} $ml={13}><Glyph $s={18}>A</Glyph><Icon w={6} h={6} sw={1.2} stroke="#4a7db1"><path d="M0 1L3 5L6 1" /></Icon></Tool>
            <ToolSep $ml={9} />
            <Tool $w={24} $ml={9}>
              <Icon w={24} h={26}>
                <path d="M1 21L8 2L13 15M4 14H12" />
                <path d="M12 18L19 11L24 16L17 23Z" fill="#e6cdea" stroke="#9c5aa3" />
              </Icon>
            </Tool>
          </Row>
          <Row>
            <Tool $w={34} $ml={-1}><Glyph $b>B</Glyph></Tool>
            <Tool $w={34}><Glyph $i>I</Glyph></Tool>
            <Tool $w={34}><Glyph $d="underline">U</Glyph></Tool>
            <Tool $w={34}><Glyph $s={20} $shadow>S</Glyph></Tool>
            <Tool $w={34}><Glyph $d="line-through">ab</Glyph></Tool>
            <Tool $w={46} $pl={4}>
              <SpacingStack>
                <Glyph $s={15}>AV</Glyph>
                <Icon w={24} h={7} stroke={BLUE} sw={1.3}><path d="M1 3.5H23M4 1L1 3.5L4 6M20 1L23 3.5L20 6" /></Icon>
              </SpacingStack>
              <Caret $ml={6} $s={3} />
            </Tool>
            <Tool $w={48} $pl={8}>
              <Glyph $s={20}>Aa</Glyph>
              <Caret $ml={3} $s={3} />
            </Tool>
            <ToolSep $ml={7} />
            <Tool $w={50} $ml={10} $pl={0}>
              <ColorIcon $c="#f3e600">
                <Icon w={20} h={22} stroke="#666">
                  <path d="M3 20L6 12L15 2L19 6L9 16Z" />
                </Icon>
              </ColorIcon>
              <Caret $ml={9} $s={3} />
            </Tool>
            <Tool $w={52} $pl={2}>
              <ColorIcon $c="#e81416"><Glyph $s={21}>A</Glyph></ColorIcon>
              <Caret $ml={10} $s={3} />
            </Tool>
          </Row>
        </Rows>
      </Group>

      <Group w={478} label="Paragraph" launcher pl={13} shift={24}>
        <Rows $w={245}>
          <Row>
            <Tool $w={50} $pl={5}>
              <ListIcon marks="M7 3H23M7 11H23M7 19H23">
                <path d="M0 0.5H4.5V5H0ZM0 8.5H4.5V13H0ZM0 16.5H4.5V21H0Z" fill={BLUE} stroke="none" />
              </ListIcon>
              <Caret $ml={10} $s={3} />
            </Tool>
            <Tool $w={55} $pl={6}>
              <ListIcon marks="M8 3H24M8 11H24M8 19H24">
                <text x="0" y="7" fontSize="7.5" fontFamily="Liberation Sans" fill={BLUE} stroke="none">1</text>
                <text x="0" y="14" fontSize="7.5" fontFamily="Liberation Sans" fill={BLUE} stroke="none">2</text>
                <text x="0" y="21" fontSize="7.5" fontFamily="Liberation Sans" fill={BLUE} stroke="none">3</text>
              </ListIcon>
              <Caret $ml={10} $s={3} />
            </Tool>
            <ToolSep $ml={5} />
            <Tool $w={34} $ml={5}><ListIcon dim marks="M0 2H23M10 8H23M10 14H23M0 20H23M7 11H1M4 8L1 11L4 14" /></Tool>
            <Tool $w={34}><ListIcon dim marks="M0 2H23M10 8H23M10 14H23M0 20H23M1 11H7M4 8L7 11L4 14" /></Tool>
            <ToolSep $ml={3} />
            <Tool $w={40} $ml={9} $pl={0}>
              <ListIcon marks="M9 3H24M9 11H24M9 19H24">
                <path d="M3 2V20M1 5L3 2L5 5M1 17L3 20L5 17" stroke={BLUE} />
              </ListIcon>
              <Caret $ml={5} $s={3} />
            </Tool>
          </Row>
          <Row>
            <Tool $w={34} $on><AlignIcon d="M0 3H23M0 10H16M0 17H23" /></Tool>
            <Tool $w={34}><AlignIcon d="M0 3H23M4 10H19M0 17H23" /></Tool>
            <Tool $w={34}><AlignIcon d="M0 3H23M7 10H23M0 17H23" /></Tool>
            <Tool $w={34}><AlignIcon d="M0 3H23M0 10H23M0 17H23" /></Tool>
            <ToolSep $ml={5} />
            <Tool $w={36} $ml={11} $pl={0}>
              <Icon w={19} h={14} stroke={BLUE} sw={2}><path d="M0 3H8M11 3H19M0 11H8M11 11H19" /></Icon>
              <Caret $ml={7} $s={3} />
            </Tool>
          </Row>
        </Rows>
        <Commands $pt={1}>
          <Command $h={35}>
            <CommandIcon $w={27}>
              <Icon w={23} h={26} stroke="#333" sw={1.3}>
                <path d="M4 2V24M1 20L4 24L7 20M17 12V24M14 20L17 24L20 20" />
                <text x="17" y="10" fontSize="11" fontFamily="Liberation Sans" fill={BLUE} stroke="none" textAnchor="middle">A</text>
              </Icon>
            </CommandIcon>
            Text Direction<Caret $ml={6} $s={3} />
          </Command>
          <Command $h={35}>
            <CommandIcon $w={28}>
              <Icon w={24} h={24} stroke="#333" sw={1.3}>
                <path d="M6 3H1V20H6M18 3H23V20H18M5 11.5H19" />
                <path d="M12 2V9M9 5L12 2L15 5M12 14V22M9 19L12 22L15 19" stroke={BLUE} />
              </Icon>
            </CommandIcon>
            Align Text<Caret $ml={6} $s={3} />
          </Command>
          <Command $h={33} $off>
            <CommandIcon $w={28}>
              <Icon w={24} h={20} stroke="#b4b4b4" sw={1.2}>
                <path d="M0 6L5 1H17L20 6ZM9 8H23V19H9ZM12 11H20M12 15H20" />
              </Icon>
            </CommandIcon>
            Convert to SmartArt<Caret $ml={6} $s={3} $c="#bbb" />
          </Command>
        </Commands>
      </Group>

      <Group w={527} label="Drawing" launcher pl={13} shift={25}>
        <Gallery>
          <ShapeGrid>
            {shapes.map((s, i) => (
              <Icon key={i} w={25} h={26} stroke="#333" sw={1.2}>{s}</Icon>
            ))}
          </ShapeGrid>
          <GalleryScroll>
            <GalleryStep $off><UpCaret $s={3} $c="#bbb" /></GalleryStep>
            <GalleryStep><Caret $s={3} /></GalleryStep>
            <GalleryStep><Bar /><Caret $s={3} /></GalleryStep>
          </GalleryScroll>
        </Gallery>
        <BigButton $w={72}>
          <BigIcon>
            <Icon w={44} h={44} stroke="#333" sw={1.2}>
              <rect x="1" y="1" width="17" height="17" fill="#fff" />
              <rect x="14" y="8" width="25" height="27" fill="#fdd59a" stroke="#f0a34e" />
              <rect x="25" y="25" width="18" height="18" fill="#fff" />
            </Icon>
          </BigIcon>
          <BigLine>Arrange</BigLine>
          <BigLine><Caret $s={3} /></BigLine>
        </BigButton>
        <BigButton $w={60}>
          <BigIcon>
            <Icon w={46} h={46} stroke="#333" sw={1.3}>
              <rect x="1" y="1" width="40" height="40" rx="3" fill="#fafafa" />
              <path d="M44 17L29 35" stroke="#555" strokeWidth={3} />
              <path d="M28 32C23 34 24 40 14 44C24 46 32 42 32 36Z" fill="#3e86c9" stroke="#3e86c9" />
            </Icon>
          </BigIcon>
          <BigLine>Quick</BigLine>
          <BigLine>Styles<Caret $s={3} /></BigLine>
        </BigButton>
        <Commands $ml={7}>
          <Command $h={31}>
            <CommandIcon $w={29}>
              <Icon w={25} h={25} stroke="#333" sw={1.3}>
                <path d="M5 11L13 2L20 10L14 17H9Z" />
                <path d="M14 2C19 1 22 4 21 9" stroke={BLUE} strokeWidth={2} />
                <rect x="1" y="19" width="23" height="5" stroke="#aaa" />
              </Icon>
            </CommandIcon>
            Shape Fill<Caret $ml={6} $s={3} />
          </Command>
          <Command $h={31}>
            <CommandIcon $w={29}>
              <Icon w={25} h={26} stroke="#333" sw={1.3}>
                <path d="M14 2H2V16H8" />
                <path d="M8 17L18 4L22 7L12 19L8 20Z" stroke={BLUE} fill="#cfe2f3" strokeWidth={1.8} />
                <rect x="1" y="21" width="23" height="4" stroke="#aaa" />
              </Icon>
            </CommandIcon>
            Shape Outline<Caret $ml={6} $s={3} />
          </Command>
          <Command $h={31}>
            <CommandIcon $w={27}>
              <Icon w={25} h={22} stroke="#333" sw={1.6}>
                <path d="M1 11L9 2H24L18 17H7L1 15Z" fill="#bbb" />
                <path d="M7 17L11 8H24" />
                <path d="M1 11L7 17V21L1 15Z" fill="#666" />
              </Icon>
            </CommandIcon>
            Shape Effects<Caret $ml={6} $s={3} />
          </Command>
        </Commands>
      </Group>

      <Group w={141} label="Editing" pl={16}>
        <Commands>
          <Command $h={31}>
            <CommandIcon $w={28}>
              <Icon w={24} h={24} stroke="#333" sw={1.3}>
                <circle cx="15" cy="9" r="8" />
                <path d="M9 15L1 23" />
              </Icon>
            </CommandIcon>
            Find
          </Command>
          <Command $h={31}>
            <CommandIcon $w={28}>
              <Icon w={24} h={24} stroke={BLUE} sw={1.5}>
                <path d="M11 7C5 7 1 12 3 17C5 20 8 20 11 20M8 17L11 20L8 23" />
                <text x="12" y="10" fontSize="13" fontFamily="Liberation Sans" fill="#a66db0" stroke="none">b</text>
                <text x="15" y="22" fontSize="13" fontFamily="Liberation Sans" fill={BLUE} stroke="none">c</text>
              </Icon>
            </CommandIcon>
            Replace<Caret $ml={12} $s={3} />
          </Command>
          <Command $h={31}>
            <CommandIcon $w={28}>
              <Icon w={16} h={24} stroke="#333" sw={1.2}>
                <path d="M2 1V21L6 16L9 23L12 22L9 15H15Z" />
              </Icon>
            </CommandIcon>
            Select<Caret $ml={6} $s={3} />
          </Command>
        </Commands>
      </Group>

      <Collapse>
        <Icon w={12} h={8} stroke="#555" sw={2}>
          <path d="M1 7L6 2L11 7" />
        </Icon>
      </Collapse>
    </Ribbon>

    <Workspace>
      <ThumbPane>
        <MasterRow>
          <SlideNumber>1</SlideNumber>
          <Selected>
            <Thumb zoom={1.18}>
              <MiniBox $l={7} $t={4} $w={76} $h={11} $s={4.4}>{T}</MiniBox>
              <MiniBox $l={7} $t={14} $w={76} $h={28}><ListLines /></MiniBox>
            </Thumb>
          </Selected>
        </MasterRow>
        <ChildList>
          {layouts.map((l, i) => (
            <ChildSlot key={i}>
              <Thumb>{l}</Thumb>
            </ChildSlot>
          ))}
        </ChildList>
      </ThumbPane>
      <ScrollBar $h={804}>
        <ScrollButton><UpCaret $s={6} /></ScrollButton>
        <ScrollThumb $h={560} />
        <ScrollTrack />
        <ScrollButton><Caret $s={6} /></ScrollButton>
      </ScrollBar>

      <Canvas>
        <Slide>
          <SlideSheet />
          <SlideBand><LearnIt>Learn iT!</LearnIt></SlideBand>
          <SlideStripe />

          <RotateStem />
          <RotateHandle>
            <Icon w={30} h={30} stroke="#8f8f8f" sw={3}>
              <path d="M22 5C15 0 5 3 3 12C2 20 9 27 17 24" />
              <path d="M10 11C13 7 19 8 21 12L23 18" strokeWidth={2.4} />
              <path d="M16 17H30L23 24Z" fill="#8f8f8f" stroke="none" />
            </Icon>
          </RotateHandle>

          <TitleBox $l={82} $t={36} $w={1037} $h={132}>
            <Selection>Click to edit Master title style</Selection>
          </TitleBox>

          <Placeholder $l={82} $t={180} $w={1038} $h={374} $open>
            <Level $h={44} $bullet={11} $s={32}><Bullet $w={21}>•</Bullet>Click to edit Master text styles</Level>
            <Level $h={36} $bullet={55} $s={27.5}><Bullet $w={22}>•</Bullet>Second level</Level>
            <Level $h={36} $bullet={99} $s={23}><Bullet $w={22}>•</Bullet>Third level</Level>
            <Level $h={26} $bullet={145} $s={20.7}><Bullet $w={22}>•</Bullet>Fourth level</Level>
            <Level $h={38} $bullet={189} $s={20.4}><Bullet $w={23}>•</Bullet>Fifth level</Level>
          </Placeholder>

          <Placeholder $l={398} $t={625} $w={408} $h={39} $line="dotted" $c="#fff">
            <FooterText>Footer</FooterText>
          </Placeholder>
          <Placeholder $l={848} $t={625} $w={273} $h={39} $line="dotted" $c="#fff">
            <FooterText $end>‹#›</FooterText>
          </Placeholder>

          {handles.map(([x, y]) => (
            <Handle key={`${x}-${y}`} $x={x} $y={y} />
          ))}
        </Slide>
      </Canvas>

      <SideScroll>
        <ScrollBar $h={726}>
          <ScrollButton><UpCaret $s={6} /></ScrollButton>
          <ScrollThumb $h={54} />
          <ScrollTrack />
          <ScrollButton><Caret $s={6} /></ScrollButton>
        </ScrollBar>
        <SideGap />
        <PageStep><UpCaret $s={6} /><StackUp $s={6} /></PageStep>
        <PageStep><Caret $s={6} /><Caret $s={6} /></PageStep>
      </SideScroll>

      <Pane>
        <PaneHead>
          <PaneTitle>Format Shape</PaneTitle>
          <PaneDrop $s={7} $c="#777" />
          <Icon w={14} h={14} ml={48} stroke="#666" sw={3}>
            <path d="M1 1L13 13M13 1L1 13" />
          </Icon>
        </PaneHead>
        <Modes>
          <Mode $on>Shape Options</Mode>
          <Mode>Text Options</Mode>
        </Modes>
        <PaneIcons>
          <Icon w={33} h={33} stroke="#c8552c" sw={1.5}>
            <path d="M1 18L15 6L27 20L14 31Z" fill="#fff" />
            <path d="M10 10C10 1 16 0 17 3C18 5 15 10 14 12" />
            <path d="M18 4C28 6 32 18 27 30C26 22 26 18 22 14Z" fill="#c8552c" stroke="none" />
          </Icon>
          <Icon w={32} h={34} stroke="#777" sw={1.2}>
            <path d="M16 1L31 12L25 28H7L1 12Z" fill="#fff" />
            <path d="M7 28L5 33M25 28L27 33" />
          </Icon>
          <Icon w={32} h={33} stroke="#777" sw={1}>
            <path d="M9 2H31M9 0V4M31 0V4M0 11H6M0 32H6M3 11V32" />
            <rect x="9" y="10" width="22" height="22" fill="#6a6a6a" stroke="none" />
            <path d="M20 13V29M12 21H28" stroke="#fff" strokeWidth={1.4} strokeDasharray="3 2" />
          </Icon>
        </PaneIcons>
        <PaneRule>
          <Notch>
            <Icon w={20} h={13} stroke="#c6c6c6" sw={1.5} fill="#e6e6e6">
              <path d="M0 13L10 1L20 13" />
            </Icon>
          </Notch>
        </PaneRule>
        <SectionHead $pl={9} $mt={2} $c={RUST}>
          <Icon w={12} h={12} stroke="none" fill="#444">
            <path d="M12 0V12H0Z" />
          </Icon>
          <SectionName $ml={9}>Fill</SectionName>
        </SectionHead>
        <RadioList>
          {fills.map(([label, on], i) => (
            <RadioRow key={i}>
              <RadioDot $on={on} />
              <span>{label}</span>
            </RadioRow>
          ))}
        </RadioList>
        <SectionHead $pl={12} $mt={12}>
          <Icon w={8} h={12} stroke="#777" sw={1}>
            <path d="M1 1L7 6L1 11Z" />
          </Icon>
          <SectionName $ml={10}>Line</SectionName>
        </SectionHead>
      </Pane>
    </Workspace>

    <StatusBar>
      <span>Slide Master</span>
      <Icon w={21} h={22} ml={21} stroke="#555" sw={1}>
        <path d="M10 3C8 1 3 1 1 2V19C3 18 8 18 10 20C12 18 16 18 19 19V10M10 3V20M10 3C11 2 13 1 15 1" />
        <path d="M12 10L15 13L20 5" stroke="#777" strokeWidth={2} />
      </Icon>
      <StatusRight>
        <Icon w={24} h={26} stroke="#555">
          <rect x="0" y="0" width="20" height="16" fill="#555" stroke="none" />
          <path d="M3 21H12" strokeWidth={2} />
          <circle cx="16" cy="18" r="4" strokeWidth={3} />
        </Icon>
        <StatusText $ml={2}>Display Settings</StatusText>
        <Icon w={20} h={22} ml={37} stroke="#666" sw={1.1}>
          <path d="M1 1H19V21H1ZM12 1V13H1" />
          <rect x="5" y="4" width="5" height="5" />
        </Icon>
        <Icon w={20} h={22} ml={26} stroke="#666" sw={1.1}>
          <path d="M1 1H9V9H1ZM11 1H19V9H11ZM1 12H9V21H1ZM11 12H19V21H11Z" />
        </Icon>
        <Icon w={20} h={22} ml={25} stroke="#666" sw={1.1}>
          <path d="M1 1H19V20H1ZM10 1V22M3 5H8M3 9H8M3 13H8M3 17H8M12 5H17M12 9H17M12 13H17M12 17H17" />
        </Icon>
        <Icon w={20} h={24} ml={25} stroke="#666" sw={1.1}>
          <path d="M0 1H20M2 1V14H18V1M10 14V23M5 23H15M6 7H14" />
        </Icon>
        <Icon w={12} h={3} ml={19} stroke="#666" sw={3}>
          <path d="M0 1.5H12" />
        </Icon>
        <Zoom>
          <ZoomThumb />
          <ZoomTick />
        </Zoom>
        <Icon w={13} h={13} ml={5} stroke="#555" sw={2}>
          <path d="M0 6.5H13M6.5 0V13" />
        </Icon>
        <StatusText $ml={12}>63%</StatusText>
        <Icon w={17} h={22} ml={18} stroke="#666" sw={1}>
          <path d="M1 1H16V21H1ZM8.5 3V8M6.5 5L8.5 3L10.5 5M8.5 14V19M6.5 17L8.5 19L10.5 17M3 11H6M11 11H14" />
        </Icon>
      </StatusRight>
    </StatusBar>
    <TaskStrip />

    <Pointer width="20" height="28" viewBox="0 0 20 28">
      <path d="M1 1V22L6 17L10 26L14 24L10 16H18Z" fill="#fff" stroke="#222" strokeWidth="1.2" />
    </Pointer>
  </Window>
);

export default App;
